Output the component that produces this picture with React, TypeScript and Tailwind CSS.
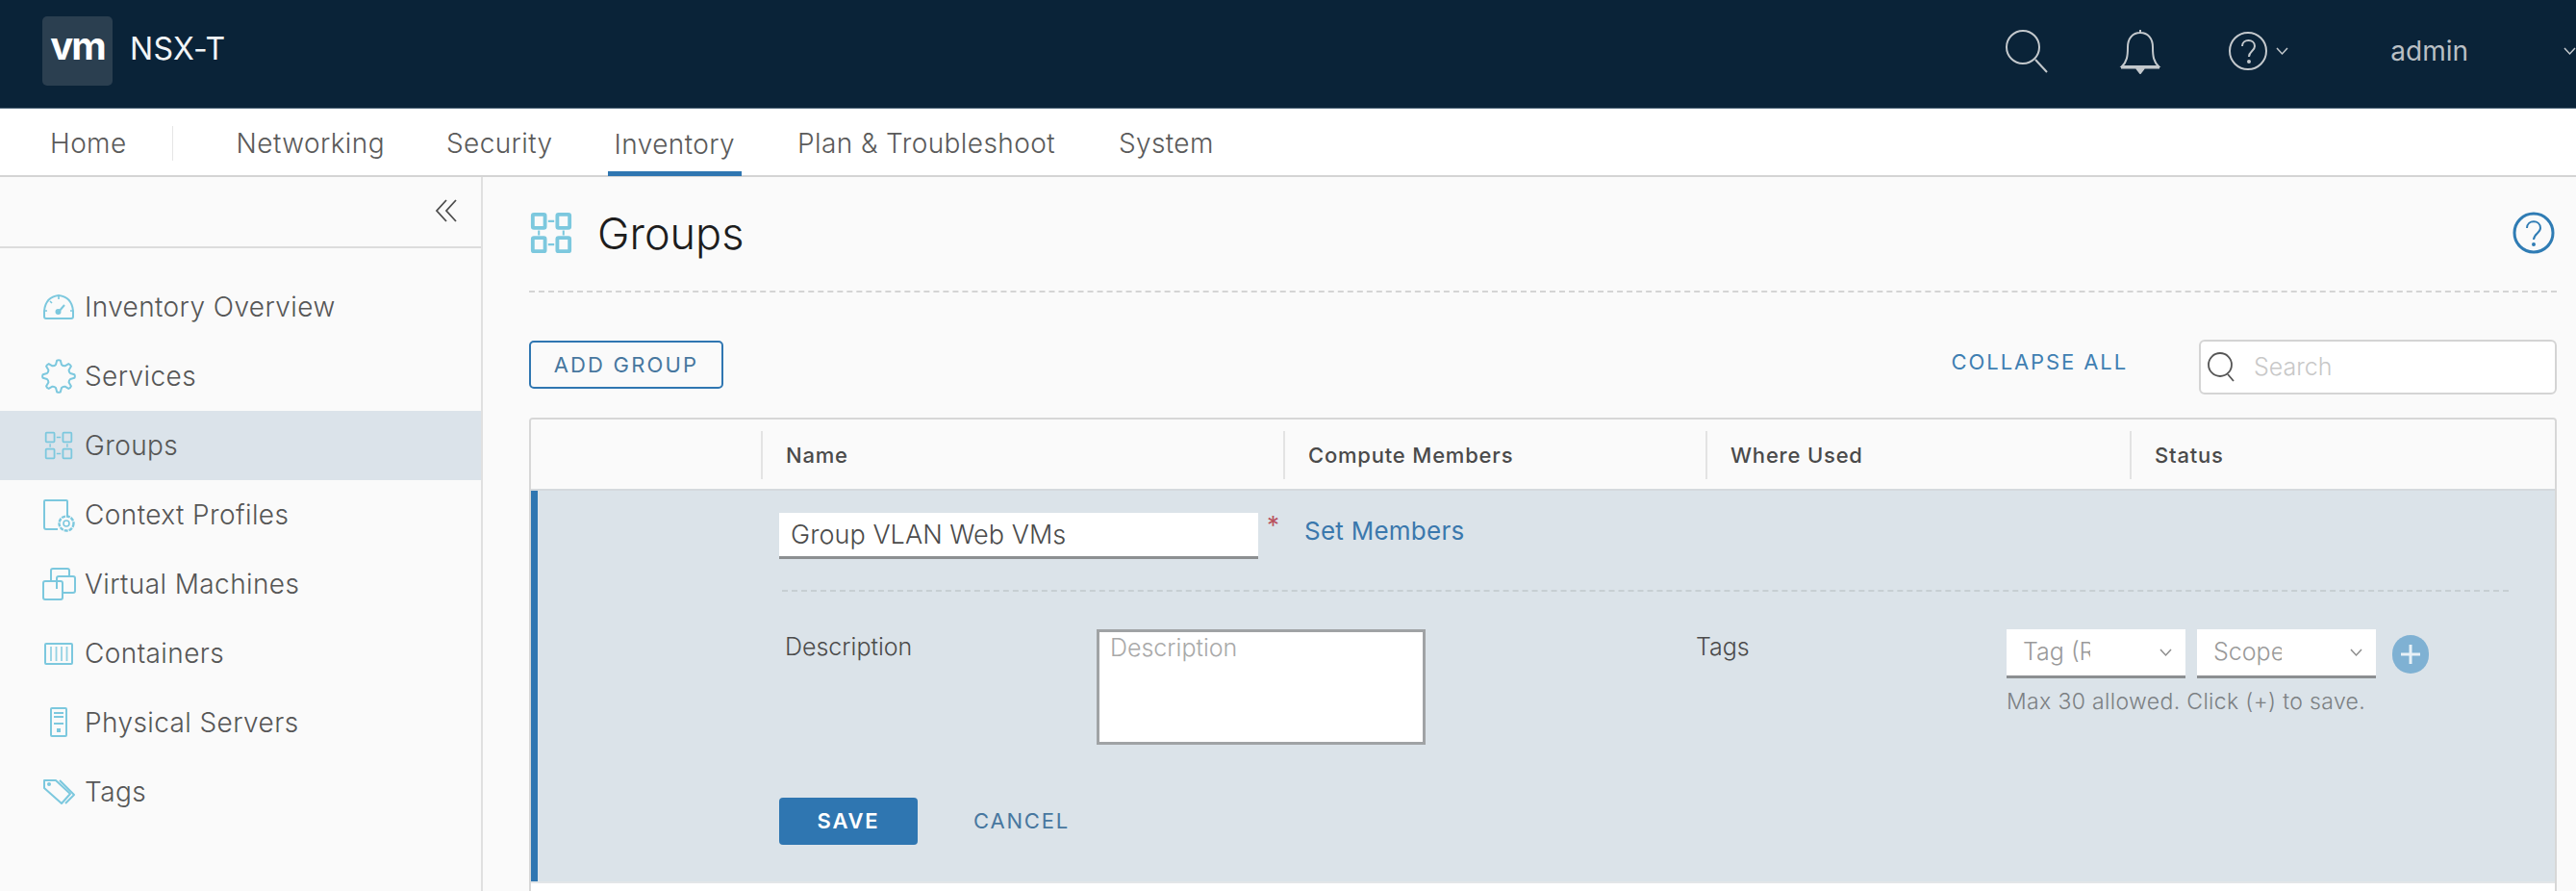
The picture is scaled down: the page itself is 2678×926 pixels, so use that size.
import React from "react";

const cyan = "#7cc8de";

function GroupsIcon({ size, sw }: { size: number; sw: number }) {
  return (
    <svg width={size} height={size} viewBox="0 0 36 36" fill="none" stroke={cyan} strokeWidth={sw}>
      <rect x="3" y="3" width="10" height="11" rx="1" />
      <rect x="23" y="3" width="10" height="11" rx="1" />
      <rect x="3" y="22" width="10" height="11" rx="1" />
      <rect x="23" y="22" width="10" height="11" rx="1" />
      <path d="M15.5 8.5h5M15.5 27.5h5M8 16v4M28 16v4" strokeWidth="1.6" />
    </svg>
  );
}

function gearPath(cx: number, cy: number, inner: number, outer: number, teeth: number) {
  const pts: string[] = [];
  const step = (Math.PI * 2) / teeth;
  for (let i = 0; i < teeth; i++) {
    const a = i * step - Math.PI / 2;
    const p = (r: number, t: number) => {
      const x = cx + r * Math.cos(a + t * step);
      const y = cy + r * Math.sin(a + t * step);
      return `${x.toFixed(2)} ${y.toFixed(2)}`;
    };
    pts.push(`${i === 0 ? "M" : "L"}${p(inner, -0.3)}`);
    pts.push(`L${p(outer, -0.14)}`);
    pts.push(`Q${p(outer + 0.8, 0)} ${p(outer, 0.14)}`);
    pts.push(`L${p(inner, 0.3)}`);
    pts.push(`Q${p(inner - 1.2, 0.5)} ${p(inner, 0.7)}`);
  }
  return pts.join(" ") + "Z";
}

const icons: Record<string, React.ReactNode> = {
  overview: (
    <svg width="36" height="36" viewBox="0 0 36 36" fill="none" stroke={cyan} strokeWidth="2">
      <path d="M5 30a2 2 0 0 1-2-2v-6C4 12 10 7 18 6c8 1 14 6 15 16v6a2 2 0 0 1-2 2z" />
      <path d="M18 23l6-7" />
      <circle cx="17.500" cy="23" r="2" fill={cyan} />
      <path d="M18 7v3M6 22H3M33 22h-3M9 12l2 2" strokeWidth="1.6" />
    </svg>
  ),
  services: (
    <svg width="36" height="36" viewBox="0 0 36 36" fill="none" stroke={cyan} strokeWidth="2" strokeLinejoin="round">
      <path d={gearPath(18, 18, 12.5, 16.5, 8)} />
    </svg>
  ),
  groups: <GroupsIcon size={32} sw={2} />,
  context: (
    <svg width="36" height="36" viewBox="0 0 36 36" fill="none" stroke={cyan} strokeWidth="2">
      <path d="M17 33H5a2 2 0 0 1-2-2V4a1 1 0 0 1 1-1h22a1 1 0 0 1 1 1v15" />
      <circle cx="26" cy="27" r="7.500" strokeDasharray="4 1" strokeWidth="2.400" />
      <circle cx="26" cy="27" r="3" strokeWidth="1.600" />
    </svg>
  ),
  vm: (
    <svg width="36" height="36" viewBox="0 0 36 36" fill="none" stroke={cyan} strokeWidth="2">
      <rect x="2" y="15" width="20" height="19" rx="2" />
      <path d="M10 14V4a2 2 0 0 1 2-2h15a2 2 0 0 1 2 2v6" />
      <path d="M22 27h11a2 2 0 0 0 2-2V12a2 2 0 0 0-2-2H18a2 2 0 0 0-2 2v11" />
    </svg>
  ),
  containers: (
    <svg width="36" height="36" viewBox="0 0 36 36" fill="none" stroke={cyan} strokeWidth="2">
      <rect x="4" y="8" width="28" height="21" rx="1" />
      <path d="M10 11v15M15.500 11v15M21 11v15M26.500 11v15" strokeWidth="1.800" opacity="0.8" />
    </svg>
  ),
  servers: (
    <svg width="36" height="36" viewBox="0 0 36 36" fill="none" stroke={cyan} strokeWidth="2">
      <rect x="10" y="3" width="16" height="29" rx="1" />
      <path d="M13 8h10M13 12h10M13 19h10" strokeWidth="1.800" />
      <rect x="16" y="24" width="4" height="4" fill={cyan} stroke="none" />
    </svg>
  ),
  tags: (
    <svg width="36" height="36" viewBox="0 0 36 36" fill="none" stroke={cyan} strokeWidth="2">
      <path d="M3 6h12l15 14-9 10L3 14z" strokeLinejoin="round" />
      <path d="M19 6l15 15-9 9" strokeLinejoin="round" />
      <circle cx="8" cy="10" r="1" fill={cyan} />
    </svg>
  ),
};

const sideItems = [
  ["overview", "Inventory Overview"],
  ["services", "Services"],
  ["groups", "Groups"],
  ["context", "Context Profiles"],
  ["vm", "Virtual Machines"],
  ["containers", "Containers"],
  ["servers", "Physical Servers"],
  ["tags", "Tags"],
];

function Chevron({ color, w = 13 }: { color: string; w?: number }) {
  return (
    <svg width={w} height="10" viewBox="0 0 13 10" fill="none" stroke={color} strokeWidth="1.500">
      <path d="M1 2l5.500 6L12 2" />
    </svg>
  );
}

function Select({ label, clip }: { label: string; clip: number }) {
  return (
    <div className="w-[186px] h-[51px] bg-white border-b-[3px] border-[#8c8f91] flex items-center justify-between pl-[17px] pr-[14px]">
      <span className="block overflow-hidden whitespace-nowrap text-[25px] text-[#9a9a9a] font-light" style={{ width: clip }}>{label}</span>
      <Chevron color="#8d8d8d" />
    </div>
  );
}

export default function App() {
  return (
    <div className="w-[2678px] h-[926px] overflow-hidden bg-[#fafafa] flex flex-col font-['Inter',sans-serif] text-[#565656]">
      <header className="h-[113px] shrink-0 bg-[#0a2338] border-b border-[#5c7182] flex items-center pl-[44px] pb-[7px]">
        <div className="w-[73px] h-[72px] rounded-[5px] bg-[#2b3f50] flex items-center justify-center text-white font-bold text-[40px] leading-none tracking-[-2px] pb-[9px]">vm</div>
        <span className="ml-[18px] mb-[4px] text-[32px] tracking-[0.3px] text-[#f2f5f7] font-normal">NSX-T</span>
        <div className="ml-auto flex items-center text-[#c3c8cc]">
          <svg width="46" height="46" viewBox="0 0 46 46" fill="none" stroke="#c3c8cc" strokeWidth="2">
            <circle cx="19" cy="19" r="17" />
            <path d="M32 32l12 13" />
          </svg>
          <svg className="ml-[73px]" width="44" height="48" viewBox="0 0 44 48" fill="none" stroke="#c3c8cc" strokeWidth="2">
            <path d="M22 2v3M3 40c5-5 6-10 6-20 0-9 5-15 13-15s13 6 13 15c0 10 1 15 6 20z" />
            <path d="M2 41h40" strokeWidth="3" />
            <path d="M18 42l4 5 4-5" fill="#c3c8cc" />
          </svg>
          <svg className="ml-[69px]" width="42" height="42" viewBox="0 0 42 42" fill="none" stroke="#c3c8cc" strokeWidth="2">
            <circle cx="21" cy="21" r="19" />
            <path d="M15 16c0-8 13-8 13 0 0 5-6 5-6 11" />
            <circle cx="22" cy="32" r="1" fill="#c3c8cc" />
          </svg>
          <span className="ml-[8px]"><Chevron color="#c3c8cc" /></span>
          <span className="ml-[106px] text-[28px] font-normal text-[#b9bfc4]">admin</span>
          <span className="ml-[99px] w-[13px] overflow-hidden"><Chevron color="#c3c8cc" /></span>
        </div>
      </header>

      <nav className="h-[71px] shrink-0 bg-white border-b-2 border-[#d4d4d4] flex items-center pt-[3px] text-[28px] tracking-[0.4px] font-light text-[#5a5a5a] relative">
        <span className="ml-[52px]">Home</span>
        <span className="ml-[47px] w-px h-[36px] bg-[#e6e6e6]" />
        <span className="ml-[66px]">Networking</span>
        <span className="ml-[64px]">Security</span>
        <span className="ml-[57px] relative flex items-center h-full px-[7px] border-b-[5px] border-[#2f76b1] pt-[5px] -mb-[2px]">Inventory</span>
        <span className="ml-[58px]">Plan &amp; Troubleshoot</span>
        <span className="ml-[66px]">System</span>
      </nav>

      <div className="flex-1 flex min-h-0">
        <aside className="w-[502px] shrink-0 border-r-2 border-[#e0e0e0] flex flex-col">
          <div className="h-[74px] border-b-2 border-[#dcdcdc] flex items-center justify-end pr-[24px] pb-[3px]">
            <svg width="24" height="26" viewBox="0 0 24 26" fill="none" stroke="#4d4d4d" strokeWidth="1.800">
              <path d="M12 2L2 13l10 11M22 2L12 13l10 11" />
            </svg>
          </div>
          <div className="pt-[25px]">
            {sideItems.map(([k, label]) => (
              <div key={k} className={`h-[72px] flex items-center pl-[43px] text-[28px] tracking-[0.4px] font-light ${k === "groups" ? "bg-[#dbe3ea]" : ""}`}>
                <span className="w-[36px] h-[36px] flex items-center justify-center">{icons[k]}</span>
                <span className="ml-[9px]">{label}</span>
              </div>
            ))}
          </div>
        </aside>

        <main className="flex-1 min-w-0 pl-[48px] pr-[20px]">
          <div className="h-[120px] border-b-2 border-dashed border-[#d4d4d4] flex items-center pb-[2px] pr-[2px]">
            <span className="flex"><GroupsIcon size={46} sw={3} /></span>
            <h1 className="ml-[25px] text-[45px] font-light text-[#1d1d1d] leading-none">Groups</h1>
            <svg className="ml-auto" width="44" height="44" viewBox="0 0 44 44" fill="none" stroke="#2f7cb4" strokeWidth="3">
              <circle cx="22" cy="22" r="20" />
              <path d="M15 17c0-9 14-9 14 0 0 5-7 6-7 12" strokeWidth="2" />
              <circle cx="22" cy="34" r="1" fill="#2f7cb4" strokeWidth="2" />
            </svg>
          </div>

          <div className="h-[130px] flex items-start pt-[50px]">
            <button className="w-[202px] h-[50px] rounded-[5px] border-2 border-[#2f76b1] text-[#47779f] text-[22px] font-normal tracking-[2.2px]">ADD GROUP</button>
            <span className="ml-auto mt-[6px] text-[22px] font-normal tracking-[1.9px] text-[#3f7fb2]">COLLAPSE ALL</span>
            <div className="ml-[74px] -mt-[1px] w-[372px] h-[57px] rounded-[6px] border-2 border-[#d4d4d4] bg-white flex items-center pl-[5px]">
              <svg width="32" height="36" viewBox="0 0 32 36" fill="none" stroke="#555" strokeWidth="1.800">
                <circle cx="15" cy="15" r="12" />
                <path d="M23 25l6 7" />
              </svg>
              <span className="ml-[18px] text-[25px] font-light text-[#c8c8c8]">Search</span>
            </div>
          </div>

          <div className="border-2 border-b-0 border-[#d7d7d7] rounded-t-[4px] overflow-hidden bg-white">
            <div className="h-[74px] pt-[2px] bg-[#fafafa] border-b-2 border-[#d4d9dd] grid grid-cols-[239px_543px_439px_441px_1fr] items-center text-[22px] tracking-[0.8px] font-medium text-[#4a4a4a]">
              <span />
              <span className="h-[50px] border-l-2 border-[#e3e3e3] pl-[24px] flex items-center">Name</span>
              <span className="h-[50px] border-l-2 border-[#e3e3e3] pl-[24px] flex items-center">Compute Members</span>
              <span className="h-[50px] border-l-2 border-[#e3e3e3] pl-[24px] flex items-center">Where Used</span>
              <span className="h-[50px] border-l-2 border-[#e3e3e3] pl-[24px] flex items-center">Status</span>
            </div>

            <div className="h-[406px] border-l-[8px] border-[#2f76b1] bg-[#dbe3e9] pl-[251px] -ml-[1px] pt-[23px]">
              <div className="flex items-start">
                <div className="w-[498px] h-[48px] bg-white border-b-[3px] border-[#8c8f91] pl-[12px] pt-[1px] flex items-center text-[27px] tracking-[0.05px] font-light text-[#4b4b4b]">Group VLAN Web VMs</div>
                <span className="ml-[9px] -mt-[2px] text-[26px] text-[#b9525f] leading-[30px]">*</span>
                <span className="ml-[26px] -mt-[1px] text-[26px] tracking-[0.25px] font-normal text-[#3a78ad]">Set Members</span>
              </div>
              <div className="mt-[32px] ml-[3px] mr-[48px] border-t-2 border-dashed border-[#c7cfd3]" />
              <div className="mt-[39px] flex items-start">
                <span className="ml-[6px] w-[324px] text-[25px] font-light text-[#4b4b4b]">Description</span>
                <div className="w-[342px] h-[120px] bg-white border-[3px] border-[#a0a3a5] pl-[11px] leading-[32px] text-[25px] font-light text-[#a9a9a9]">Description</div>
                <span className="ml-[281px] w-[323px] text-[25px] font-light text-[#4b4b4b]">Tags</span>
                <div>
                  <div className="flex items-center">
                    <Select label="Tag (Required)" clip={70} />
                    <span className="ml-[12px]"><Select label="Scope" clip={71} /></span>
                    <span className="ml-[17px] w-[38px] h-[40px] rounded-full bg-[#7fb1d3] flex items-center justify-center">
                      <svg width="22" height="22" viewBox="0 0 22 22" stroke="#e8f1f7" strokeWidth="3"><path d="M11 1v20M1 11h20" /></svg>
                    </span>
                  </div>
                  <div className="mt-[7px] text-[23px] tracking-[0.35px] font-light text-[#7b8083] whitespace-nowrap">Max 30 allowed. Click (+) to save.</div>
                </div>
              </div>
              <div className="flex items-center">
                <button className="w-[144px] h-[49px] mt-[55px] rounded-[4px] bg-[#2f76b1] text-white text-[22px] font-semibold tracking-[1.800px]">SAVE</button>
                <span className="ml-[58px] mt-[55px] text-[22px] font-normal tracking-[1.800px] text-[#47779f]">CANCEL</span>
              </div>
            </div>
            <div className="h-[12px] bg-white border-t-2 border-[#e3e6e8]" />
          </div>
        </main>
      </div>
    </div>
  );
}
